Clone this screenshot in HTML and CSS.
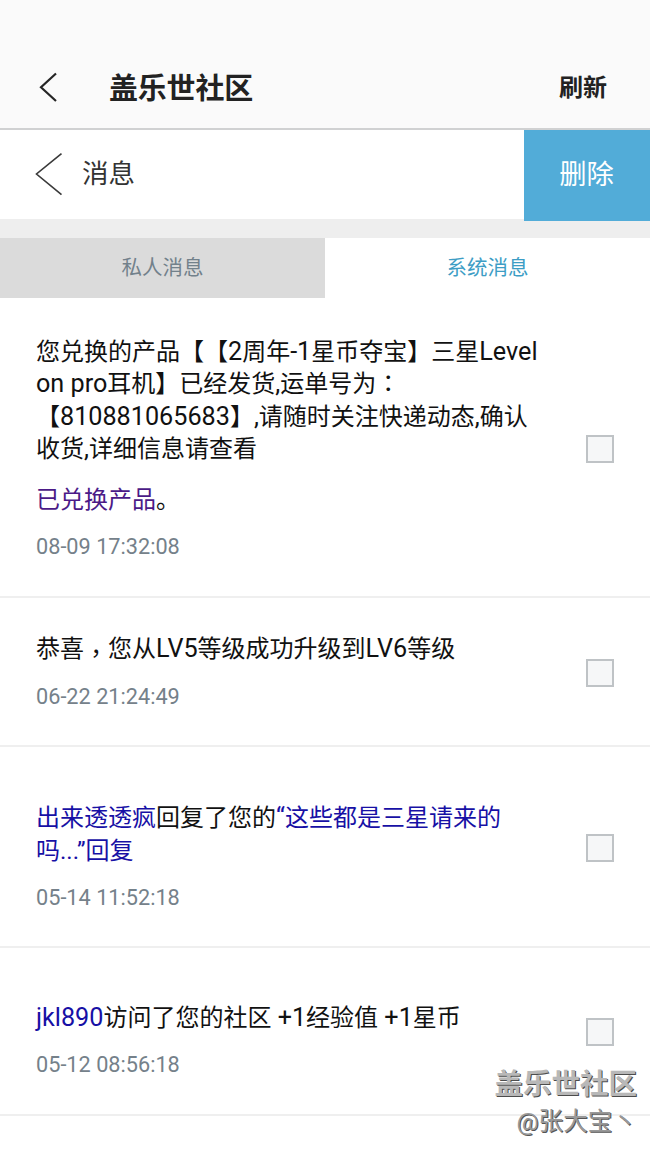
FILE: index.html
```html
<!DOCTYPE html>
<html lang="zh-CN">
<head>
<meta charset="utf-8">
<title>盖乐世社区</title>
<link rel="stylesheet" href="styles.css">
</head>
<body>
<header class="appbar">
  <svg class="appbar-back" width="20" height="32" viewBox="0 0 20 32"><path d="M18 1.5 3 15.3 18 29"/></svg>
  <h1 class="appbar-title">盖乐世社区</h1>
  <span class="refresh">刷新</span>
</header>
<div class="subbar">
  <svg class="subbar-back" width="28" height="44" viewBox="0 0 28 44"><path d="M26.5 0.6 1.5 21 26.5 41.6"/></svg>
  <h2 class="subbar-title">消息</h2>
  <button class="delete">删除</button>
</div>
<nav class="tabs">
  <span class="tab">私人消息</span>
  <span class="tab active">系统消息</span>
</nav>
<main class="list">
  <section class="item first">
    <div class="content">
      <p class="text">您兑换的产品【【<span class="lat">2</span>周年<span class="lat">-1</span>星币夺宝】三星<span class="lat">Level</span><br><span class="lat">on pro</span>耳机】已经发货<span class="lat">,</span>运单号为<span class="mid" lang="zh-TW">：</span><br>【<span class="lat">810881065683</span>】<span class="lat">,</span>请随时关注快递动态<span class="lat">,</span>确认<br>收货<span class="lat">,</span>详细信息请查看</p>
      <p class="text more"><a class="visited">已兑换产品</a>。</p>
      <time class="time">08-09 17:32:08</time>
    </div>
    <i class="check"></i>
  </section>
  <section class="item second">
    <div class="content">
      <p class="text">恭喜<span class="mid comma" lang="zh-TW">，</span>您从<span class="lat">LV5</span>等级成功升级到<span class="lat">LV6</span>等级</p>
      <time class="time">06-22 21:24:49</time>
    </div>
    <i class="check"></i>
  </section>
  <section class="item third">
    <div class="content">
      <p class="text"><a class="link">出来透透疯</a>回复了您的<a class="link"><span class="lat">“</span>这些都是三星请来的<br>吗...”回复</a></p>
      <time class="time">05-14 11:52:18</time>
    </div>
    <i class="check"></i>
  </section>
  <section class="item fourth">
    <div class="content">
      <p class="text"><a class="link lat">jkl890</a>访问了您的社区<span class="lat"> +1</span>经验值<span class="lat"> +1</span>星币</p>
      <time class="time">05-12 08:56:18</time>
    </div>
    <i class="check"></i>
  </section>
</main>
<div class="watermark">
  <div class="mark-name">盖乐世社区</div>
  <div class="mark-user">@张大宝丶</div>
</div>
</body>
</html>
```
FILE: styles.css
```css
* { box-sizing: border-box; margin: 0; padding: 0; }
body {
  position: relative;
  width: 650px;
  height: 1156px;
  overflow: hidden;
  background: #fff;
  font-family: Roboto, "Noto Sans CJK SC", sans-serif;
  text-spacing-trim: space-all;
}
svg { fill: none; flex: none; }
.appbar {
  display: flex;
  align-items: center;
  height: 130px;
  padding: 47px 43px 0 38px;
  background: #fafafa;
  border-bottom: 2px solid #d0d1d2;
}
.appbar-back { stroke: #252525; stroke-width: 2.2; }
.appbar-title { margin: 2px 0 0 51px; font-size: 29px; line-height: 40px; letter-spacing: -0.2px; font-weight: 700; color: #222; }
.refresh { margin: 1px 0 0 auto; font-size: 24px; line-height: 34px; font-weight: 700; color: #222; }
.subbar {
  display: flex;
  align-items: center;
  height: 89px;
  padding-left: 35px;
}
.subbar-back { stroke: #3a3a3a; stroke-width: 1.6; }
.subbar-title { margin: -7px 0 0 19px; font-size: 26.5px; font-weight: 400; color: #333; }
.delete {
  align-self: flex-start;
  flex: none;
  width: 126px;
  height: 91px;
  margin-left: auto;
  padding-right: 1px;
  border: 0;
  background: #52acd8;
  color: #fff;
  font: 400 27.3px/91px Roboto, "Noto Sans CJK SC", sans-serif;
  z-index: 1;
}
.tabs { display: flex; height: 79px; border-top: 19px solid #eee; }
.tab {
  flex: 1;
  height: 60px;
  background: #dbdbdb;
  color: #72818b;
  font-size: 20.5px;
  line-height: 60px;
  text-align: center;
}
.tab.active { background: #fff; color: #3d9dc5; }
.item {
  display: flex;
  align-items: center;
  justify-content: space-between;
  padding: 0 36px;
  border-bottom: 2px solid #efefef;
}
.first { height: 300px; padding-top: 4px; }
.second { height: 149px; padding-top: 2px; }
.third { height: 201px; padding-top: 2px; }
.third .content { padding-top: 20px; }
.fourth { height: 168px; padding-top: 2px; }
.fourth .content { padding-top: 18px; }
.content { white-space: nowrap; }
.text { font-size: 24px; line-height: 32.6px; color: #111; }
.lat { font-size: 25.2px; line-height: 0; white-space: pre; }
.mid { font-family: "Noto Sans CJK TC", sans-serif; line-height: 0; }
.comma { vertical-align: -5px; }
.more { margin-top: 18px; }
.visited { color: #4b1a87; }
.link { color: #1710a5; }
.time { display: block; margin-top: 16px; font-size: 21.7px; line-height: 30px; color: #75818a; }
.check {
  flex: none;
  width: 28px;
  height: 28px;
  border: 2px solid #bfc3c6;
  background: #f6f7f8;
}
.watermark {
  position: absolute;
  right: 13px;
  top: 1065px;
  text-align: right;
}
.mark-name {
  font-size: 28.5px;
  line-height: 40px;
  font-weight: 700;
  color: #b8b8b8;
  text-shadow: 1px 1px 0 #4c4c4c;
}
.mark-user {
  font-size: 24.6px;
  line-height: 34px;
  color: #999;
  text-shadow: 1px 1px 0 #555;
}
```
